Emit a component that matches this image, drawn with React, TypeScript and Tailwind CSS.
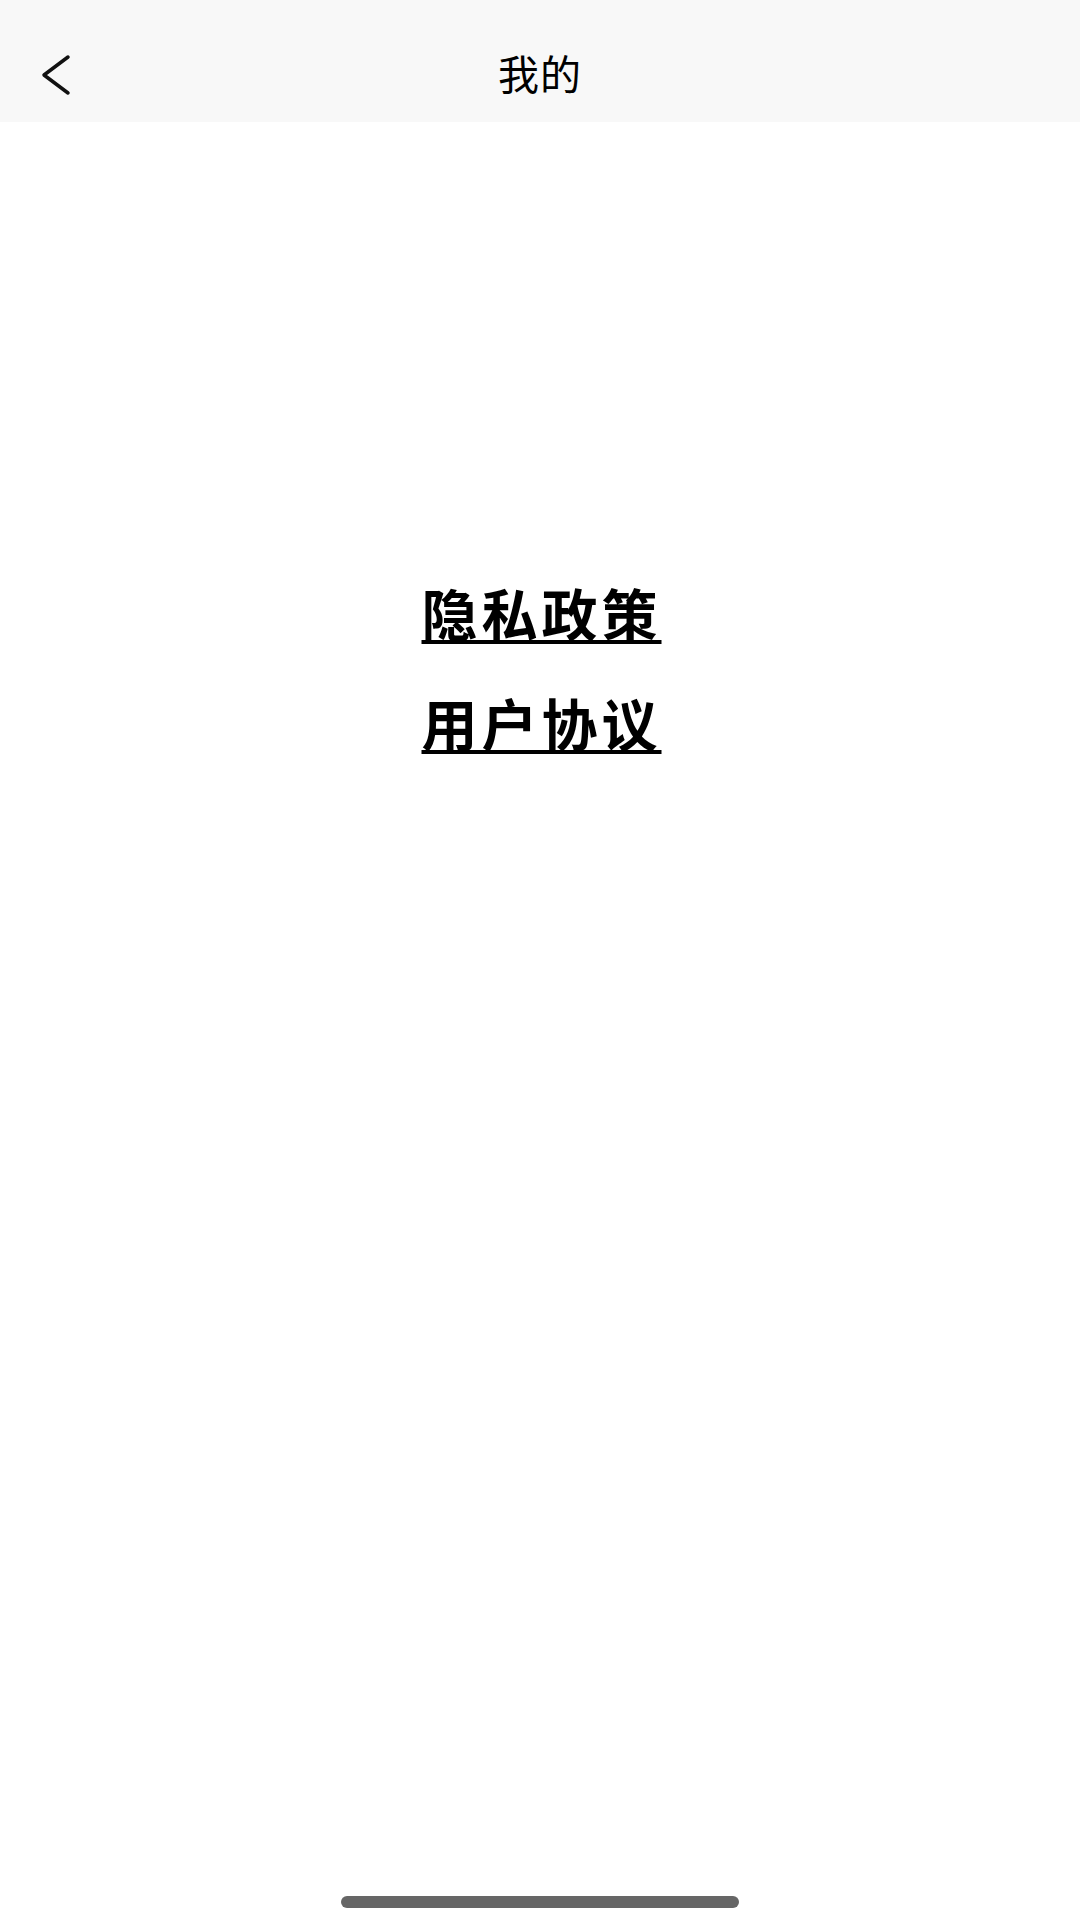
export default function App() {
  return (
    <div
      className="flex flex-col w-[1080px] h-[1920px] bg-white text-black"
      style={{ fontFamily: '"Noto Sans CJK SC", "Noto Sans", sans-serif' }}
    >
      {/* top bar */}
      <div className="relative flex items-center justify-center h-[122px] bg-[#f8f8f8] shrink-0">
        <button className="absolute left-[36px] top-[50px] w-[40px] h-[50px]">
          <svg width="40" height="50" viewBox="0 0 40 50" fill="none">
            <path d="M32 7 L8 25 L32 43" stroke="#111" strokeWidth="3.5" strokeLinecap="round" strokeLinejoin="round" />
          </svg>
        </button>
        <h1 className="text-[41px] leading-none mt-[23px] tracking-[1px]">我的</h1>
      </div>

      {/* links */}
      <div className="flex flex-col items-center gap-[52px] pt-[461px]">
        <a className="pl-[3px] text-[56px] font-bold leading-[58px] tracking-[4px] underline decoration-[4px] underline-offset-[4px]">隐私政策</a>
        <a className="pl-[3px] text-[56px] font-bold leading-[58px] tracking-[4px] underline decoration-[4px] underline-offset-[4px]">用户协议</a>
      </div>

      {/* home indicator */}
      <div className="mt-auto flex justify-center pb-[12px]">
        <div className="w-[398px] h-[12px] rounded-full bg-[#666666]" />
      </div>
    </div>
  );
}
